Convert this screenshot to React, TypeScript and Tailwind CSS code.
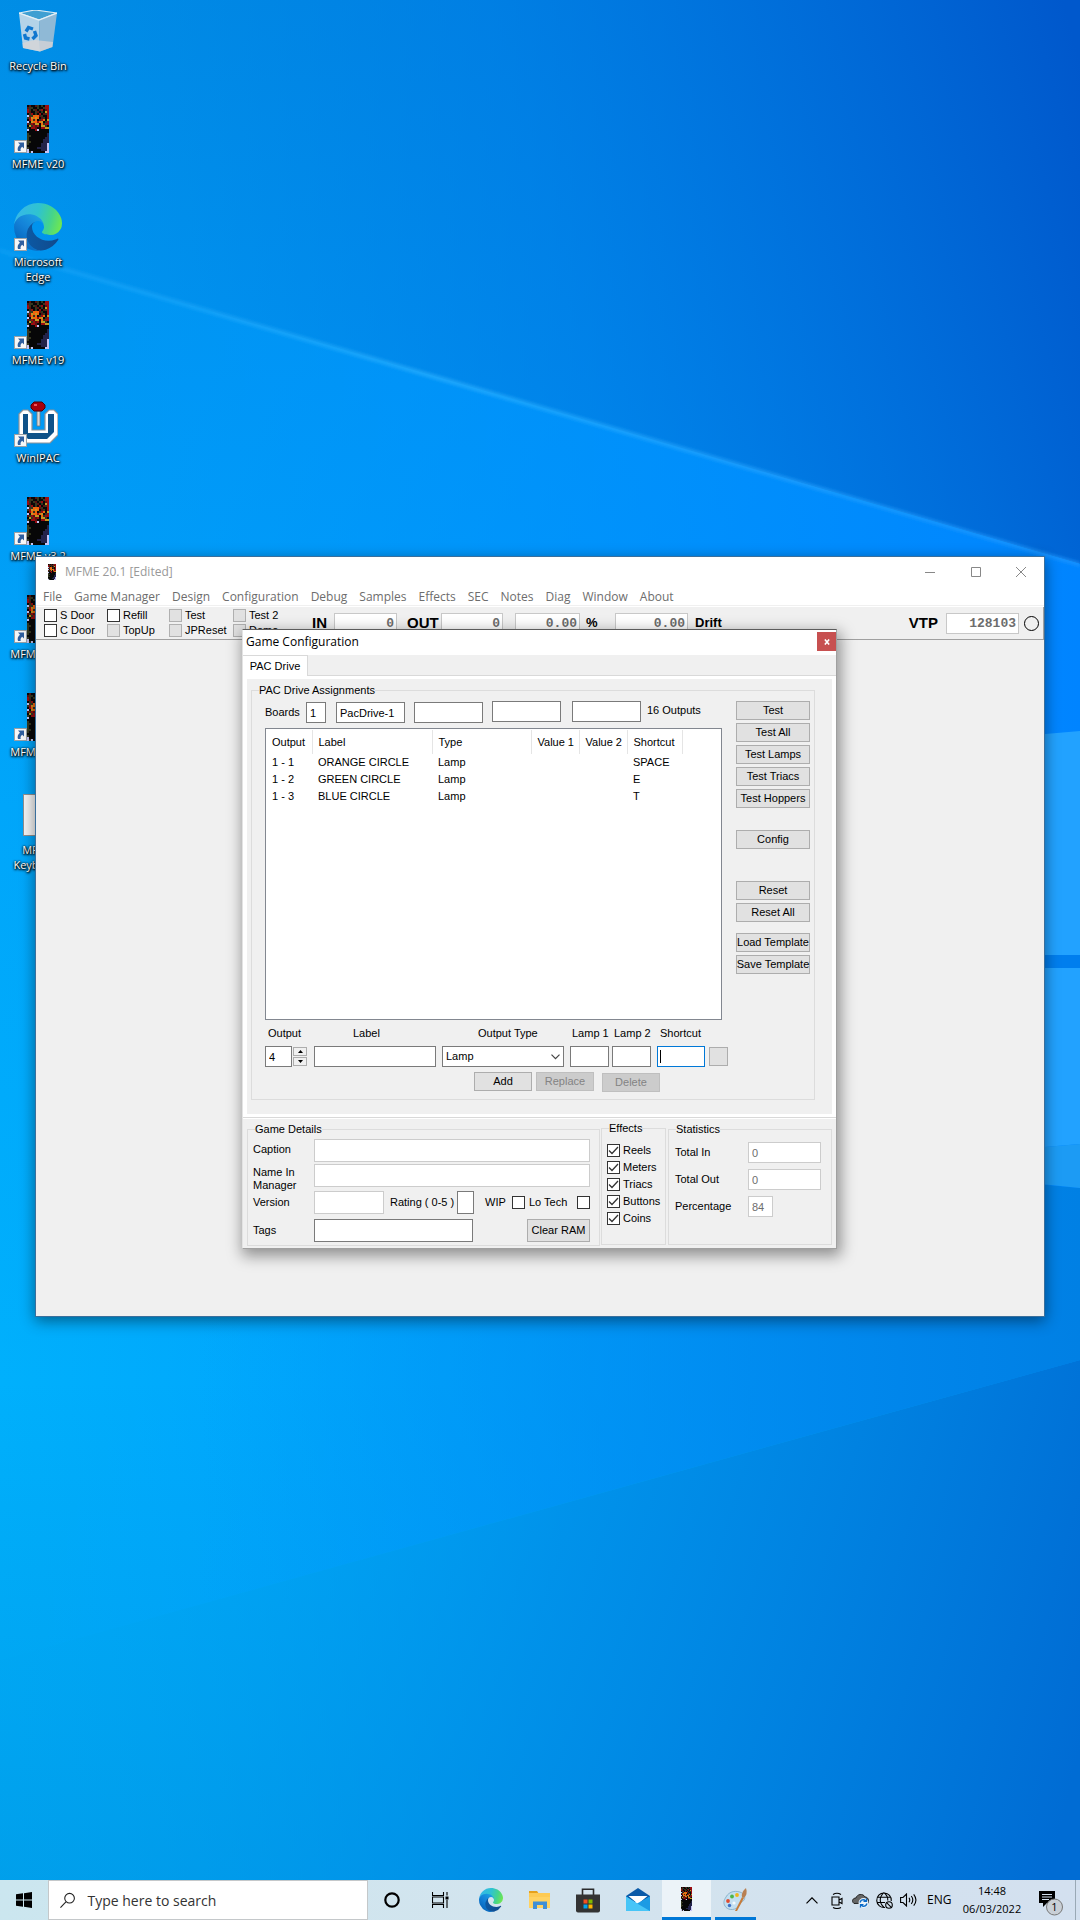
import React from "react";

const UI = "font-['Open_Sans',sans-serif]";
const field = "border border-[#7a7a7a] bg-white px-[3px] outline-none";
const softField = "border border-[#cccccc] bg-white px-[3px] text-[#6d6d6d] outline-none";
const push =
  "flex items-center justify-center whitespace-nowrap border border-[#adadad] bg-[#e1e1e1]";

/* ---------- drawings ---------- */

const cabinetRows = [
  "kmkkmgkgkrr",
  "mggkkgkkgrr",
  "rgkgmkgrkmr",
  "rmkkgmkgkyr",
  "kgrkgkrkmgr",
  "lggooomgkkr",
  "gryoyokmgkr",
  "krogokgroky",
  "lkyooroykgr",
  "mgrmyykogrr",
  "kygrmrkyygk",
  "gkrrmkkrryy",
  "lkkkrlkkkkk",
  "kkkkkkkkkkk",
  "gkkkkkkkkkn",
  "ggkkkkkkkkn",
  "gkkkkkkkknn",
  "gkkkkkkknnn",
  "ggkkkkkknnn",
  "gkkkkkknnnl",
  "kkkkkkknnnl",
  "gkkkknnnnnl",
  "lkkkkkknnnl",
  "lglkkkkkkll",
];

const cabinetColours: Record<string, string> = {
  r: "#9a0c10",
  m: "#5a1210",
  k: "#070708",
  y: "#c39a24",
  g: "#34371f",
  o: "#f2640c",
  l: "#c5c3f5",
  n: "#23234a",
};

function Cabinet({ className }: { className: string }) {
  return (
    <svg viewBox="0 0 11 24" className={className} shapeRendering="crispEdges" aria-hidden="true">
      {cabinetRows.map((row, y) =>
        row.split("").map((c, x) => (
          <rect key={x + "-" + y} x={x} y={y} width="1" height="1" fill={cabinetColours[c]} />
        )),
      )}
    </svg>
  );
}

function ShortcutArrow() {
  return (
    <svg viewBox="0 0 13 13" className="absolute bottom-0 left-0 size-[13px]" aria-hidden="true">
      <rect x=".5" y=".5" width="12" height="12" fill="#f7f7f7" stroke="#9aa0a6" />
      <path d="M4 2.500h6v6L8.200 6.800C6.500 8 6.300 9.300 6.700 11H4C3 8.500 4 6.300 6 4.700Z" fill="#2f5f9f" />
    </svg>
  );
}

function EdgeLogo({ className, id }: { className: string; id: string }) {
  return (
    <svg viewBox="0 0 256 256" className={className} aria-hidden="true">
      <defs>
        <linearGradient id={id + "a"} x1="63" y1="178" x2="241" y2="178" gradientUnits="userSpaceOnUse">
          <stop offset="0" stopColor="#0c59a4" />
          <stop offset="1" stopColor="#114a8b" />
        </linearGradient>
        <linearGradient id={id + "b"} x1="157" y1="105" x2="46" y2="226" gradientUnits="userSpaceOnUse">
          <stop offset="0" stopColor="#1b9de2" />
          <stop offset=".5" stopColor="#1482d8" />
          <stop offset="1" stopColor="#0668bf" />
        </linearGradient>
        <linearGradient id={id + "c"} x1="10" y1="60" x2="246" y2="130" gradientUnits="userSpaceOnUse">
          <stop offset="0" stopColor="#35b8e8" />
          <stop offset=".45" stopColor="#2fc3d0" />
          <stop offset=".75" stopColor="#44d48c" />
          <stop offset="1" stopColor="#6ee652" />
        </linearGradient>
      </defs>
      <path
        fill={"url(#" + id + "a)"}
        d="M231 190.500a94 94 0 0 1-10.500 4.700 102 102 0 0 1-36 6.500c-47.400 0-88.700-32.600-88.700-74.500a31.500 31.500 0 0 1 16.500-27.300C69.500 101.700 58.500 146.400 58.500 172.500c0 74 68.200 81.500 82.900 81.500 7.900 0 19.900-2.300 27-4.600l1.300-.4a128.300 128.300 0 0 0 66.600-52.800 4 4 0 0 0-5.300-5.700Z"
      />
      <path
        fill={"url(#" + id + "b)"}
        d="M105.700 241.400A79.200 79.200 0 0 1 83 220.100a80.700 80.700 0 0 1 29.500-120.200c3.100-1.500 8.400-4.100 15.500-4a32.300 32.300 0 0 1 25.700 13 31.800 31.800 0 0 1 6.400 18.700c0-.2 24.500-79.600-80-79.600-43.900 0-80 41.700-80 78.200a130 130 0 0 0 12.100 56 128 128 0 0 0 156.400 67 75.500 75.500 0 0 1-62.800-8Z"
      />
      <path
        fill={"url(#" + id + "c)"}
        d="M152.300 148.900c-.9 1-3.400 2.500-3.400 5.600 0 2.600 1.700 5.200 4.800 7.300 14.400 10 41.600 8.700 41.600 8.700a59.500 59.500 0 0 0 30.300-8.300 61.400 61.400 0 0 0 30.400-52.900c.3-22.400-8-37.300-11.300-43.900C223.400 23.800 177.600 0 128 0A128 128 0 0 0 0 126.200c.5-36.500 36.800-66 80-66 3.500 0 23.500.3 42 10a72.600 72.600 0 0 1 30.900 29.300c6.100 10.600 7.200 24.100 7.200 29.500s-2.700 13.300-7.800 19.900Z"
      />
    </svg>
  );
}

function RecycleBin() {
  return (
    <svg viewBox="0 0 38 42" className="h-[42px] w-[38px]" aria-hidden="true">
      <path d="M0 3 16 0 38 3 20 10Z" fill="#3f9fd2" stroke="#dcebf3" strokeWidth="1.200" />
      <path d="M0 3 20 10 21 41.500 4 38Z" fill="#b4d3e8" />
      <path d="M38 3 20 10 21 41.500 33.500 37Z" fill="#8fb9d6" />
      <path d="M3.500 33 16 30l18 2-.7 5L21 41.500 4 38Z" fill="#d9d5d6" opacity=".75" />
      <path d="M0 3 20 10 38 3" fill="none" stroke="#e4f0f7" strokeWidth="1.200" />
      <g fill="none" stroke="#0f77cf" strokeWidth="3.400">
        <path d="m7 21.500 2.500-4 4.500 1.500" />
        <path d="m15.500 21 1.500 4.500-3.500 3.500" />
        <path d="m10.500 29-4-1-1-4" />
      </g>
    </svg>
  );
}

function WinIpac() {
  return (
    <svg viewBox="0 0 40 44" className="h-[44px] w-[40px]" aria-hidden="true">
      <path
        d="M1 13 5 9h5l4 4v16h13V13l4-4h5l4 4v21l-8 8H8l-7-7Z"
        fill="#fff"
        stroke="#8b9299"
        strokeWidth="1.200"
      />
      <path d="M5 13h5v19h20l0-19h6v18l-7 7H10l-5-5Z" fill="#0f5288" />
      <path d="M19 10h3v15h-3z" fill="#d9d9d9" stroke="#777" strokeWidth=".8" />
      <path d="M16 1h8l3 3v3l-3 3h-8l-3-3V4Z" fill="#a8000c" stroke="#4e0007" />
      <path d="M16 3h3v2h-3z" fill="#f0525a" />
    </svg>
  );
}

function Wallpaper() {
  return (
    <svg
      viewBox="0 0 1080 1920"
      preserveAspectRatio="none"
      className="absolute inset-0 size-full"
      aria-hidden="true"
    >
      <defs>
        <linearGradient id="wbase" x1="0" y1="0" x2="0" y2="1">
          <stop offset="0" stopColor="#0090e6" />
          <stop offset=".2" stopColor="#0099f4" />
          <stop offset=".42" stopColor="#00a6fa" />
          <stop offset=".72" stopColor="#00b0fc" />
          <stop offset=".85" stopColor="#00a8f4" />
          <stop offset="1" stopColor="#009fe9" />
        </linearGradient>
        <linearGradient id="wtop" x1="0" y1="350" x2="1080" y2="60" gradientUnits="userSpaceOnUse">
          <stop offset="0" stopColor="#0078e0" stopOpacity="0" />
          <stop offset=".5" stopColor="#0074e2" stopOpacity=".6" />
          <stop offset="1" stopColor="#0058cc" />
        </linearGradient>
        <linearGradient id="wmid" x1="0" y1="0" x2="1" y2="0">
          <stop offset="0" stopColor="#0090ff" stopOpacity="0" />
          <stop offset="1" stopColor="#0084ff" />
        </linearGradient>
        <linearGradient id="wunder" x1="200" y1="0" x2="1080" y2="0" gradientUnits="userSpaceOnUse">
          <stop offset="0" stopColor="#0094ee" stopOpacity="0" />
          <stop offset="1" stopColor="#0080e4" />
        </linearGradient>
        <linearGradient id="wlow" x1="0" y1="1500" x2="1080" y2="1750" gradientUnits="userSpaceOnUse">
          <stop offset="0" stopColor="#009cf0" stopOpacity="0" />
          <stop offset=".5" stopColor="#008ae6" stopOpacity=".75" />
          <stop offset="1" stopColor="#006cd4" />
        </linearGradient>
        <linearGradient id="wbeam" x1="0" y1="0" x2="1" y2="0">
          <stop offset="0" stopColor="#2cb2ff" stopOpacity=".2" />
          <stop offset=".4" stopColor="#2cb2ff" stopOpacity=".6" />
          <stop offset="1" stopColor="#1c96ff" stopOpacity=".6" />
        </linearGradient>
        <filter id="soft">
          <feGaussianBlur stdDeviation="1.500" />
        </filter>
      </defs>
      <rect width="1080" height="1920" fill="url(#wbase)" />
      <path d="M0 0H1080V564L0 250Z" fill="url(#wtop)" />
      <path d="M0 250 1080 564V1360L0 1660Z" fill="url(#wmid)" />
      <path d="M200 1110 1080 1188V1360L0 1660Z" fill="url(#wunder)" />
      <path d="M0 1660 1080 1360V1920H0Z" fill="url(#wlow)" />
      <path d="M0 248 1080 562v5L0 253Z" fill="url(#wbeam)" filter="url(#soft)" />
      <path d="M1000 738 1080 731V955h-80z" fill="#22a2ff" />
      <path d="M1000 955h80v13h-80z" fill="#007eee" />
      <path d="M1000 968h80v176l-80 7Z" fill="#22a2ff" />
      <path d="M1000 1151 1080 1144v44l-80-8Z" fill="#1c9bf4" />
    </svg>
  );
}

/* ---------- desktop ---------- */

function DesktopIcon({ lines, children }: { lines: string[]; children: React.ReactNode }) {
  return (
    <a href="#" className="flex h-[98px] w-[76px] flex-col items-center pt-[7px]">
      <span className="relative flex h-12 w-12 items-center justify-center">{children}</span>
      <span className="mt-[3px] text-center text-[11px] leading-[15px] whitespace-nowrap text-white [text-shadow:1px_1px_2px_#000,0_0_2px_#000,0_1px_3px_#000]">
        {lines.map((l) => (
          <span key={l} className="block">
            {l}
          </span>
        ))}
      </span>
    </a>
  );
}

function MfmeShortcut({ label }: { label: string }) {
  return (
    <DesktopIcon lines={[label]}>
      <Cabinet className="h-12 w-[22px]" />
      <ShortcutArrow />
    </DesktopIcon>
  );
}

/* ---------- main window ---------- */

const menus = [
  "File", "Game Manager", "Design", "Configuration", "Debug", "Samples",
  "Effects", "SEC", "Notes", "Diag", "Window", "About",
];

function Check({
  label,
  disabled,
  checked,
}: {
  label: string;
  disabled?: boolean;
  checked?: boolean;
}) {
  return (
    <label className="flex items-center gap-[3px] whitespace-nowrap">
      <span className="relative flex size-[13px] shrink-0">
        <input
          type="checkbox"
          defaultChecked={checked}
          disabled={disabled}
          className="size-[13px] appearance-none border border-[#333] bg-white disabled:border-[#b0b0b0] disabled:bg-[#e1e1e1]"
        />
        {checked && (
          <svg viewBox="0 0 13 13" className="pointer-events-none absolute inset-0 size-[13px]" aria-hidden="true">
            <path d="m2 6.500 3 3 6-6.500" fill="none" stroke="#333" strokeWidth="1.300" />
          </svg>
        )}
      </span>
      {label}
    </label>
  );
}

function Meter({ name, value, width }: { name: string; value: string; width: string }) {
  return (
    <input
      aria-label={name}
      readOnly
      value={value}
      className={
        "h-[21px] border border-[#c8c8c8] bg-white px-[2px] text-right font-['Liberation_Mono',monospace] text-[13px] font-bold text-[#6d6d6d] outline-none " +
        width
      }
    />
  );
}

function Toolbar() {
  return (
    <div className="flex h-[33px] border-r border-b border-[#a0a0a0] bg-[#f0f0f0] pl-2 text-[11px] leading-[13px]">
      <div className="grid shrink-0 grid-cols-[63px_62px_64px_79px] content-start gap-y-[2px] pt-[2px]">
        <Check label="S Door" />
        <Check label="Refill" />
        <Check label="Test" disabled />
        <Check label="Test 2" disabled />
        <Check label="C Door" />
        <Check label="TopUp" disabled />
        <Check label="JPReset" disabled />
        <Check label="Demo" disabled />
      </div>
      <div className="flex flex-1 items-start pt-[6px] text-[15px] leading-[19px] font-bold">
        <span className="w-[22px]">IN</span>
        <Meter name="In" value="0" width="w-[63px]" />
        <span className="ml-[10px] w-[34px]">OUT</span>
        <Meter name="Out" value="0" width="w-[62px]" />
        <span className="w-3" />
        <Meter name="Percent" value="0.00" width="w-[65px]" />
        <span className="ml-[6px] w-[29px] text-[13px]">%</span>
        <Meter name="Drift" value="0.00" width="w-[73px]" />
        <span className="ml-[7px] text-[13px]">Drift</span>
        <span className="ml-auto mr-2">VTP</span>
        <Meter name="VTP" value="128103" width="w-[73px]" />
        <span className="mt-[3px] mr-1 ml-[5px] size-[15px] rounded-full border border-black" />
      </div>
    </div>
  );
}

/* ---------- configuration dialog ---------- */

function Group({ title, className, children }: { title: string; className: string; children: React.ReactNode }) {
  return (
    <fieldset className={"relative border border-[#dcdcdc] " + className}>
      <legend className="absolute -top-[7px] left-[7px] bg-[#f0f0f0] leading-[13px] whitespace-nowrap">
        {title}
      </legend>
      {children}
    </fieldset>
  );
}

const outputs = [
  ["1 - 1", "ORANGE CIRCLE", "Lamp", "", "", "SPACE"],
  ["1 - 2", "GREEN CIRCLE", "Lamp", "", "", "E"],
  ["1 - 3", "BLUE CIRCLE", "Lamp", "", "", "T"],
];

function OutputTable() {
  return (
    <div className="mt-[5px] h-[292px] border border-[#828790] bg-white pt-[1px]">
      <table className="table-fixed border-collapse text-left">
        <colgroup>
          <col className="w-[46px]" />
          <col className="w-[120px]" />
          <col className="w-[99px]" />
          <col className="w-[48px]" />
          <col className="w-[48px]" />
          <col className="w-[55px]" />
        </colgroup>
        <thead>
          <tr className="h-6">
            {["Output", "Label", "Type", "Value 1", "Value 2", "Shortcut"].map((h) => (
              <th key={h} className="border-r border-[#e5e5e5] pl-[6px] font-normal whitespace-nowrap">
                {h}
              </th>
            ))}
          </tr>
        </thead>
        <tbody>
          {outputs.map((r) => (
            <tr key={r[0]} className="h-[17px]">
              {r.map((c, i) => (
                <td key={i} className="p-0 pl-[6px] whitespace-nowrap">
                  {c}
                </td>
              ))}
            </tr>
          ))}
        </tbody>
      </table>
    </div>
  );
}

function SideButton({ children, className = "" }: { children: string; className?: string }) {
  return <button className={push + " h-[19px] w-[74px] shrink-0 " + className}>{children}</button>;
}

function AddForm() {
  return (
    <>
      <div className="mt-[7px] flex h-[13px] whitespace-nowrap">
        <label htmlFor="out" className="w-[40px] pl-[3px]">Output</label>
        <label htmlFor="lbl" className="w-[137px] pl-12">Label</label>
        <label htmlFor="otype" className="w-[128px] pl-9">Output Type</label>
        <label htmlFor="l1" className="w-[42px] pl-[2px]">Lamp 1</label>
        <label htmlFor="l2" className="w-[45px] pl-[2px]">Lamp 2</label>
        <label htmlFor="sc" className="pl-[3px]">Shortcut</label>
      </div>
      <div className="mt-[6px] flex h-[21px] w-[463px] items-center">
        <input id="out" defaultValue="4" className={field + " h-[21px] w-[27px]"} />
        <div className="ml-px flex w-[14px] flex-col gap-px">
          {["Increase", "Decrease"].map((n, i) => (
            <button key={n} aria-label={n} className="flex h-[9px] items-center justify-center border border-[#adadad] bg-[#f0f0f0]">
              <svg viewBox="0 0 5 3" className="h-[3px] w-[5px]" aria-hidden="true">
                <path d={i === 0 ? "M0 3h5L2.500 0Z" : "M0 0h5L2.500 3Z"} />
              </svg>
            </button>
          ))}
        </div>
        <input id="lbl" className={field + " ml-[7px] h-[21px] w-[122px]"} />
        <div className="relative ml-[6px] flex">
          <select id="otype" className={field + " h-[21px] w-[122px] appearance-none"}>
            <option>Lamp</option>
          </select>
          <svg viewBox="0 0 9 6" className="pointer-events-none absolute top-2 right-1 h-[6px] w-[9px]" aria-hidden="true">
            <path d="m.5.7 4 4 4-4" fill="none" stroke="#444" strokeWidth="1.200" />
          </svg>
        </div>
        <input id="l1" className={field + " ml-[6px] h-[21px] w-[39px]"} />
        <input id="l2" className={field + " ml-[3px] h-[21px] w-[39px]"} />
        <div className="ml-[6px] flex h-[21px] w-12 items-center border border-[#0078d7] bg-white px-[2px]">
          <span className="h-[13px] w-px bg-black" />
          <input id="sc" className="w-full min-w-0 outline-none" />
        </div>
        <button aria-label="Clear shortcut" className={push + " ml-1 size-[19px]"} />
      </div>
      <div className="mt-[5px] ml-[209px] flex items-start">
        <button className={push + " h-[19px] w-[58px]"}>Add</button>
        <button disabled className="ml-1 h-[19px] w-[58px] border border-[#bfbfbf] bg-[#cccccc] text-[#838383]">
          Replace
        </button>
        <button disabled className="mt-px ml-2 h-[19px] w-[58px] border border-[#bfbfbf] bg-[#cccccc] text-[#838383]">
          Delete
        </button>
      </div>
    </>
  );
}

function PacDrivePage() {
  return (
    <div className="border-4 border-t-[3px] border-b-[3px] border-white bg-[#f0f0f0] px-1 pt-[11px] pb-[14px]">
      <Group title="PAC Drive Assignments" className="mr-[13px] flex h-[410px] justify-between pt-[10px] pr-1 pl-[13px]">
        <div className="w-[457px]">
          <div className="flex h-[22px] items-end">
            <label htmlFor="boards" className="w-[41px] self-center">Boards</label>
            <input id="boards" defaultValue="1" className={field + " h-[21px] w-5"} />
            <input aria-label="Board 1" defaultValue="PacDrive-1" className={field + " ml-[10px] h-[21px] w-[69px]"} />
            <input aria-label="Board 2" className={field + " ml-[9px] h-[21px] w-[69px]"} />
            <input aria-label="Board 3" className={field + " mb-px ml-[9px] h-[21px] w-[69px]"} />
            <input aria-label="Board 4" className={field + " mb-px ml-[11px] h-[21px] w-[69px]"} />
            <span className="ml-[6px] self-start pt-[3px] whitespace-nowrap">16 Outputs</span>
          </div>
          <OutputTable />
          <AddForm />
        </div>
        <div className="flex flex-col">
          <div className="flex flex-col gap-[3px]">
            <SideButton>Test</SideButton>
            <SideButton>Test All</SideButton>
            <SideButton>Test Lamps</SideButton>
            <SideButton>Test Triacs</SideButton>
            <SideButton>Test Hoppers</SideButton>
          </div>
          <SideButton className="mt-[22px]">Config</SideButton>
          <SideButton className="mt-8">Reset</SideButton>
          <SideButton className="mt-[3px]">Reset All</SideButton>
          <SideButton className="mt-[11px]">Load Template</SideButton>
          <SideButton className="mt-[3px]">Save Template</SideButton>
        </div>
      </Group>
    </div>
  );
}

function GameDetails() {
  return (
    <Group title="Game Details" className="h-[117px] w-[353px] pt-[9px] pl-[5px]">
      <div className="grid w-[337px] grid-cols-[61px_1fr] items-start leading-[13px]">
        <label htmlFor="cap" className="pt-1">Caption</label>
        <input id="cap" className={softField + " h-[23px]"} />
        <label htmlFor="nim" className="pt-[4px]">Name In Manager</label>
        <input id="nim" className={softField + " mt-[2px] h-[23px]"} />
      </div>
      <div className="-mt-px flex h-[23px] w-[337px] items-center whitespace-nowrap">
        <label htmlFor="ver" className="w-[61px]">Version</label>
        <input id="ver" className={softField + " h-[23px] w-[70px]"} />
        <label htmlFor="rate" className="ml-[6px] w-[67px]">Rating ( 0-5 )</label>
        <input id="rate" className={field + " h-[23px] w-[17px]"} />
        <label htmlFor="wip" className="ml-[11px] w-[27px]">WIP</label>
        <input id="wip" type="checkbox" className="size-[13px] appearance-none border border-[#333] bg-white" />
        <label htmlFor="lo" className="ml-1">Lo Tech</label>
        <input id="lo" type="checkbox" className="ml-auto size-[13px] appearance-none border border-[#333] bg-white" />
      </div>
      <div className="mt-[5px] flex h-[23px] w-[337px] items-center">
        <label htmlFor="tags" className="w-[61px]">Tags</label>
        <input id="tags" className={field + " h-[23px] w-[159px]"} />
        <button className={push + " ml-auto h-[23px] w-[63px]"}>Clear RAM</button>
      </div>
    </Group>
  );
}

const stats = [
  ["Total In", "0", "w-[73px]"],
  ["Total Out", "0", "w-[73px]"],
  ["Percentage", "84", "w-[25px]"],
];

function ConfigDialog() {
  return (
    <section
      aria-label="Game Configuration"
      className="absolute top-[72px] left-[206px] w-[595px] border border-t-[#5c5c5c] border-r-[#a0a0a0] border-b-[#a0a0a0] border-l-[#e3e3e3] bg-[#f0f0f0] text-[11px] leading-[13px] shadow-[2px_5px_14px_2px_rgba(0,0,0,0.4)]"
    >
      <header className={"flex h-[25px] items-start justify-between bg-white pl-[3px] leading-[24px] " + UI}>
        <h2 className="text-[12px]">Game Configuration</h2>
        <button aria-label="Close" className="mt-[2px] flex size-[19px] items-center justify-center bg-[#c75050] text-white">
          <svg viewBox="0 0 7 7" className="size-[6px]" aria-hidden="true">
            <path d="m1 .5 5 6m0-6-5 6" stroke="#fff" strokeWidth="1.800" />
          </svg>
        </button>
      </header>
      <div role="tablist" className="flex h-[21px] border-b border-[#d9d9d9]">
        <button role="tab" aria-selected="true" className="-mb-px h-[21px] w-[65px] border-t border-r border-[#d9d9d9] bg-white whitespace-nowrap">
          PAC Drive
        </button>
      </div>
      <PacDrivePage />
      <div className="border-t border-[#d9d9d9]">
        <div className="flex items-start gap-px border-t border-white px-1 pt-[10px] pb-[2px]">
          <GameDetails />
          <Group title="Effects" className="-mt-px mr-px flex h-[117px] w-[65px] flex-col gap-1 pt-[15px] pl-[5px]">
            <Check label="Reels" checked />
            <Check label="Meters" checked />
            <Check label="Triacs" checked />
            <Check label="Buttons" checked />
            <Check label="Coins" checked />
          </Group>
          <Group title="Statistics" className="flex h-[116px] flex-1 flex-col gap-[6px] pt-3 pl-[6px]">
            {stats.map(([name, value, w]) => (
              <label key={name} className="flex h-[21px] items-center">
                <span className="w-[73px]">{name}</span>
                <input defaultValue={value} className={softField + " h-[21px] " + w} />
              </label>
            ))}
          </Group>
        </div>
      </div>
    </section>
  );
}

function MainWindow() {
  return (
    <section
      aria-label="MFME 20.1"
      className="absolute top-[556px] right-[35px] left-[35px] h-[761px] border border-[#3a6f9c] bg-[#f0f0f0] font-['Liberation_Sans',Arial,sans-serif] shadow-[0_4px_14px_rgba(0,0,0,0.45)]"
    >
      <header className={"flex h-[29px] items-center bg-white pl-3 text-[12px] text-[#999] " + UI}>
        <Cabinet className="h-4 w-[8px]" />
        <h1 className="ml-[9px]">MFME 20.1 [Edited]</h1>
        <div className="ml-auto flex">
          <button aria-label="Minimize" className="flex h-[27px] w-[46px] items-center justify-center">
            <svg viewBox="0 0 10 10" className="size-[10px]"><path d="M0 5.500h10" stroke="#888" /></svg>
          </button>
          <button aria-label="Maximize" className="flex h-[27px] w-[45px] items-center justify-center">
            <svg viewBox="0 0 10 10" className="size-[10px]"><path d="M.5.5h9v9h-9z" fill="none" stroke="#888" /></svg>
          </button>
          <button aria-label="Close" className="flex h-[27px] w-[46px] items-center justify-center">
            <svg viewBox="0 0 10 10" className="size-[10px]"><path d="m0 0 10 10M10 0 0 10" stroke="#888" /></svg>
          </button>
        </div>
      </header>
      <nav className={"flex h-[19px] items-center gap-3 bg-white pt-[2px] pl-[7px] text-[12px] text-[#6d6d6d] " + UI}>
        {menus.map((m) => (
          <button key={m} className="whitespace-nowrap">{m}</button>
        ))}
      </nav>
      <div className="h-[2px] border-b border-white" />
      <Toolbar />
      <ConfigDialog />
    </section>
  );
}

/* ---------- taskbar ---------- */

function TaskButton({ name, className = "w-12", children }: { name: string; className?: string; children: React.ReactNode }) {
  return (
    <button aria-label={name} className={"flex h-10 shrink-0 items-center justify-center " + className}>
      {children}
    </button>
  );
}

function Taskbar() {
  return (
    <footer className="relative flex h-10 items-center bg-linear-to-r from-[#cbe6ef] via-[#d3e4ee] to-[#d3e0ef] text-black">
      <TaskButton name="Start">
        <svg viewBox="0 0 16 16" className="size-4">
          <path d="M0 2.200 7 1.300v6.200H0ZM8 1.200 16 0v7.500H8ZM0 8.500h7v6.200l-7-.9ZM8 8.500h8V16l-8-1.200Z" />
        </svg>
      </TaskButton>
      <label className="flex h-10 w-80 items-center border border-[#c4c8ca] bg-white pl-[11px]">
        <svg viewBox="0 0 17 17" className="size-[17px]" aria-hidden="true">
          <g fill="none" stroke="#222" strokeWidth="1.200">
            <circle cx="10.500" cy="6" r="5.300" />
            <path d="M6.500 10 .5 16.300" />
          </g>
        </svg>
        <input
          aria-label="Search"
          placeholder="Type here to search"
          className="ml-3 w-full text-[14px] outline-none placeholder:text-[#333]"
        />
      </label>
      <TaskButton name="Cortana">
        <svg viewBox="0 0 16 16" className="size-4"><circle cx="8" cy="8" r="6.700" fill="none" stroke="#000" strokeWidth="2.200" /></svg>
      </TaskButton>
      <TaskButton name="Task View">
        <svg viewBox="0 0 17 16" className="h-4 w-[17px]" fill="none" stroke="#000" strokeWidth="1.100">
          <path d="M.5 0v3.500h11V0M.5 16v-3.500h11V16M.5 5h11v6H.5ZM15 0v3.500M15 8v8" />
          <path d="M13.500 4.500h3v3h-3z" fill="#000" stroke="none" />
        </svg>
      </TaskButton>
      <TaskButton name="Microsoft Edge" className="w-[54px]">
        <EdgeLogo className="size-6" id="te" />
      </TaskButton>
      <TaskButton name="File Explorer" className="w-11">
        <svg viewBox="0 0 24 20" className="h-5 w-6">
          <path d="M1 1h8l2 3h-10Z" fill="#e6a11c" />
          <path d="M1 3h21v15H1Z" fill="#ffd262" />
          <path d="M1 3h21v4H1Z" fill="#fbc143" opacity=".5" />
          <path d="M5 19v-7.500h14V19h-4v-4H9v4Z" fill="#3f8fd6" />
        </svg>
      </TaskButton>
      <TaskButton name="Microsoft Store" className="w-[52px]">
        <svg viewBox="0 0 24 25" className="h-[25px] w-6">
          <path d="M6.500 7V1.300h11V7" fill="none" stroke="#2b2b2b" strokeWidth="1.600" />
          <path d="M0 6.500h24v16q0 2-2 2H2q-2 0-2-2Z" fill="#333" />
          <path d="M7.500 11.500h4v4h-4z" fill="#f25022" />
          <path d="M12.500 11.500h4v4h-4z" fill="#7fba00" />
          <path d="M7.500 16.500h4v4h-4z" fill="#00a4ef" />
          <path d="M12.500 16.500h4v4h-4z" fill="#ffb900" />
        </svg>
      </TaskButton>
      <TaskButton name="Mail">
        <svg viewBox="0 0 24 24" className="size-6">
          <path d="M0 8 12 0l12 8v6H0Z" fill="#0a5aa8" />
          <path d="M2.500 8h19L12 16Z" fill="#fff" />
          <path d="M0 8.500 12 16 24 8.500V23H0Z" fill="#35b8f1" />
          <path d="M0 23 12 15l12-6.500V23Z" fill="#1c9be4" />
          <path d="M0 8.500 12 16 24 23H0Z" fill="#47c5f7" />
        </svg>
      </TaskButton>
      <TaskButton name="MFME" className="w-[49px] border-b-[3px] border-[#0078d7] bg-[#ecf3f8]">
        <Cabinet className="h-6 w-[11px]" />
      </TaskButton>
      <TaskButton name="Paint" className="ml-1 w-[41px] border-b-[3px] border-[#0078d7]">
        <svg viewBox="0 0 25 25" className="mt-[2px] size-[25px]">
          <path d="M3 10C6 4 14 3 19 6c4 3 3 7 1 8-3 1-3 4-5 6-4 4-11 3-13-1-2-3-1-6 1-9Z" fill="#c3dff0" stroke="#7fa9c4" strokeWidth=".8" />
          <circle cx="9" cy="9.500" r="1.900" fill="#4fb548" />
          <circle cx="14" cy="8" r="1.900" fill="#f0b51a" />
          <circle cx="5" cy="14" r="1.900" fill="#df4c31" />
          <circle cx="6.500" cy="18.500" r="1.700" fill="#3f72c8" />
          <circle cx="11" cy="16" r="1.600" fill="#f4fafd" />
          <path d="m12 24 7-14 2 1-7 13Z" fill="#c87c3a" />
          <path d="M19 10q-1-5 4-9 2 6-2 10Z" fill="#b98052" />
        </svg>
      </TaskButton>
      <div className="ml-auto flex h-10 items-center">
        <svg viewBox="0 0 12 7" className="h-[7px] w-3"><path d="m.5 6.300 5.500-5.500 5.500 5.500" fill="none" stroke="#000" strokeWidth="1.200" /></svg>
        <svg viewBox="0 0 12 17" className="ml-[13px] h-[17px] w-3" fill="none" stroke="#000" strokeWidth="1.100">
          <path d="M1 5h7v8H1ZM8 8l3-1.500v5L8 10M2 2.500Q6 0 10 2.500M2 15.500q4 2 8 0" />
        </svg>
        <svg viewBox="0 0 17 15" className="ml-[9px] h-[15px] w-[17px]">
          <path d="M2 10.500C-1 8 1 5 4 5c1-4 7-5 9-1 3 0 4 3 3.500 6Z" fill="#666" stroke="#222" />
          <circle cx="11.500" cy="10" r="5" fill="#e9f3fb" />
          <path d="M8 9.500q1-3 4-2.800l2 1.300M15 10.500q-1 3-4 2.800l-2-1.300M14.500 5.500v2.800h-3M8.500 14.500v-2.800h3" fill="none" stroke="#0a6ac8" strokeWidth="1.300" />
        </svg>
        <svg viewBox="0 0 17 17" className="ml-[7px] size-[17px]" fill="none" stroke="#000" strokeWidth="1.100">
          <path d="M9 15.500A7.300 7.300 0 1 1 15.300 9M8 .7C3 5 3 11 8 15.300M8 .7c3 2.500 4 5 3.800 7.800M1.500 5.300h13M1 10.500h8" />
          <circle cx="13" cy="13" r="3.300" />
          <path d="m10.800 10.800 4.500 4.500" />
        </svg>
        <svg viewBox="0 0 17 14" className="ml-[7px] h-[14px] w-[17px]" fill="none" stroke="#000" strokeWidth="1.100">
          <path d="M.6 4.500H3L6.500 1v12L3 9.500H.6ZM9 4.800q1.500 2.200 0 4.400M11.300 3q3 4 0 8M13.700 1.300q4.500 5.700 0 11.400" />
        </svg>
        <span className="ml-[10px] w-6 text-[12px]">ENG</span>
        <div className="ml-2 w-[66px] text-center text-[11px] leading-[18px]">
          <div>14:48</div>
          <div>06/03/2022</div>
        </div>
        <svg viewBox="0 0 25 26" className="mt-[5px] ml-[14px] h-[26px] w-[25px]" aria-label="1 notification">
          <path d="M0 1h16v12H8l-4 4v-4H0Z" />
          <path d="M3 4.500h10M3 7h10M3 9.500h7" stroke="#d3e0ef" />
          <circle cx="15.500" cy="17" r="8" fill="#c9cfd6" stroke="#777" />
          <text x="15.500" y="21" textAnchor="middle" fontSize="11" fill="#000">1</text>
        </svg>
        <span className="ml-[11px] h-10 w-[5px] border-l border-[#9aa9b5]" />
      </div>
    </footer>
  );
}

export default function App() {
  return (
    <div className={"relative flex min-h-screen flex-col overflow-hidden bg-[#009cf2] " + UI}>
      <Wallpaper />
      <main className="relative flex-1">
        <div className="flex flex-col items-start">
          <DesktopIcon lines={["Recycle Bin"]}><RecycleBin /></DesktopIcon>
          <MfmeShortcut label="MFME v20" />
          <DesktopIcon lines={["Microsoft", "Edge"]}>
            <EdgeLogo className="size-12" id="de" />
            <ShortcutArrow />
          </DesktopIcon>
          <MfmeShortcut label="MFME v19" />
          <DesktopIcon lines={["WinIPAC"]}>
            <WinIpac />
            <ShortcutArrow />
          </DesktopIcon>
          <MfmeShortcut label="MFME v3.2" />
          <MfmeShortcut label="MFME v5.1" />
          <MfmeShortcut label="MFME v6.1" />
          <DesktopIcon lines={["MFME", "Keyboard"]}>
            <span className="h-[42px] w-[31px] border border-[#8f8f8f] bg-[#f4f4f4]" />
          </DesktopIcon>
        </div>
        <MainWindow />
      </main>
      <Taskbar />
    </div>
  );
}
